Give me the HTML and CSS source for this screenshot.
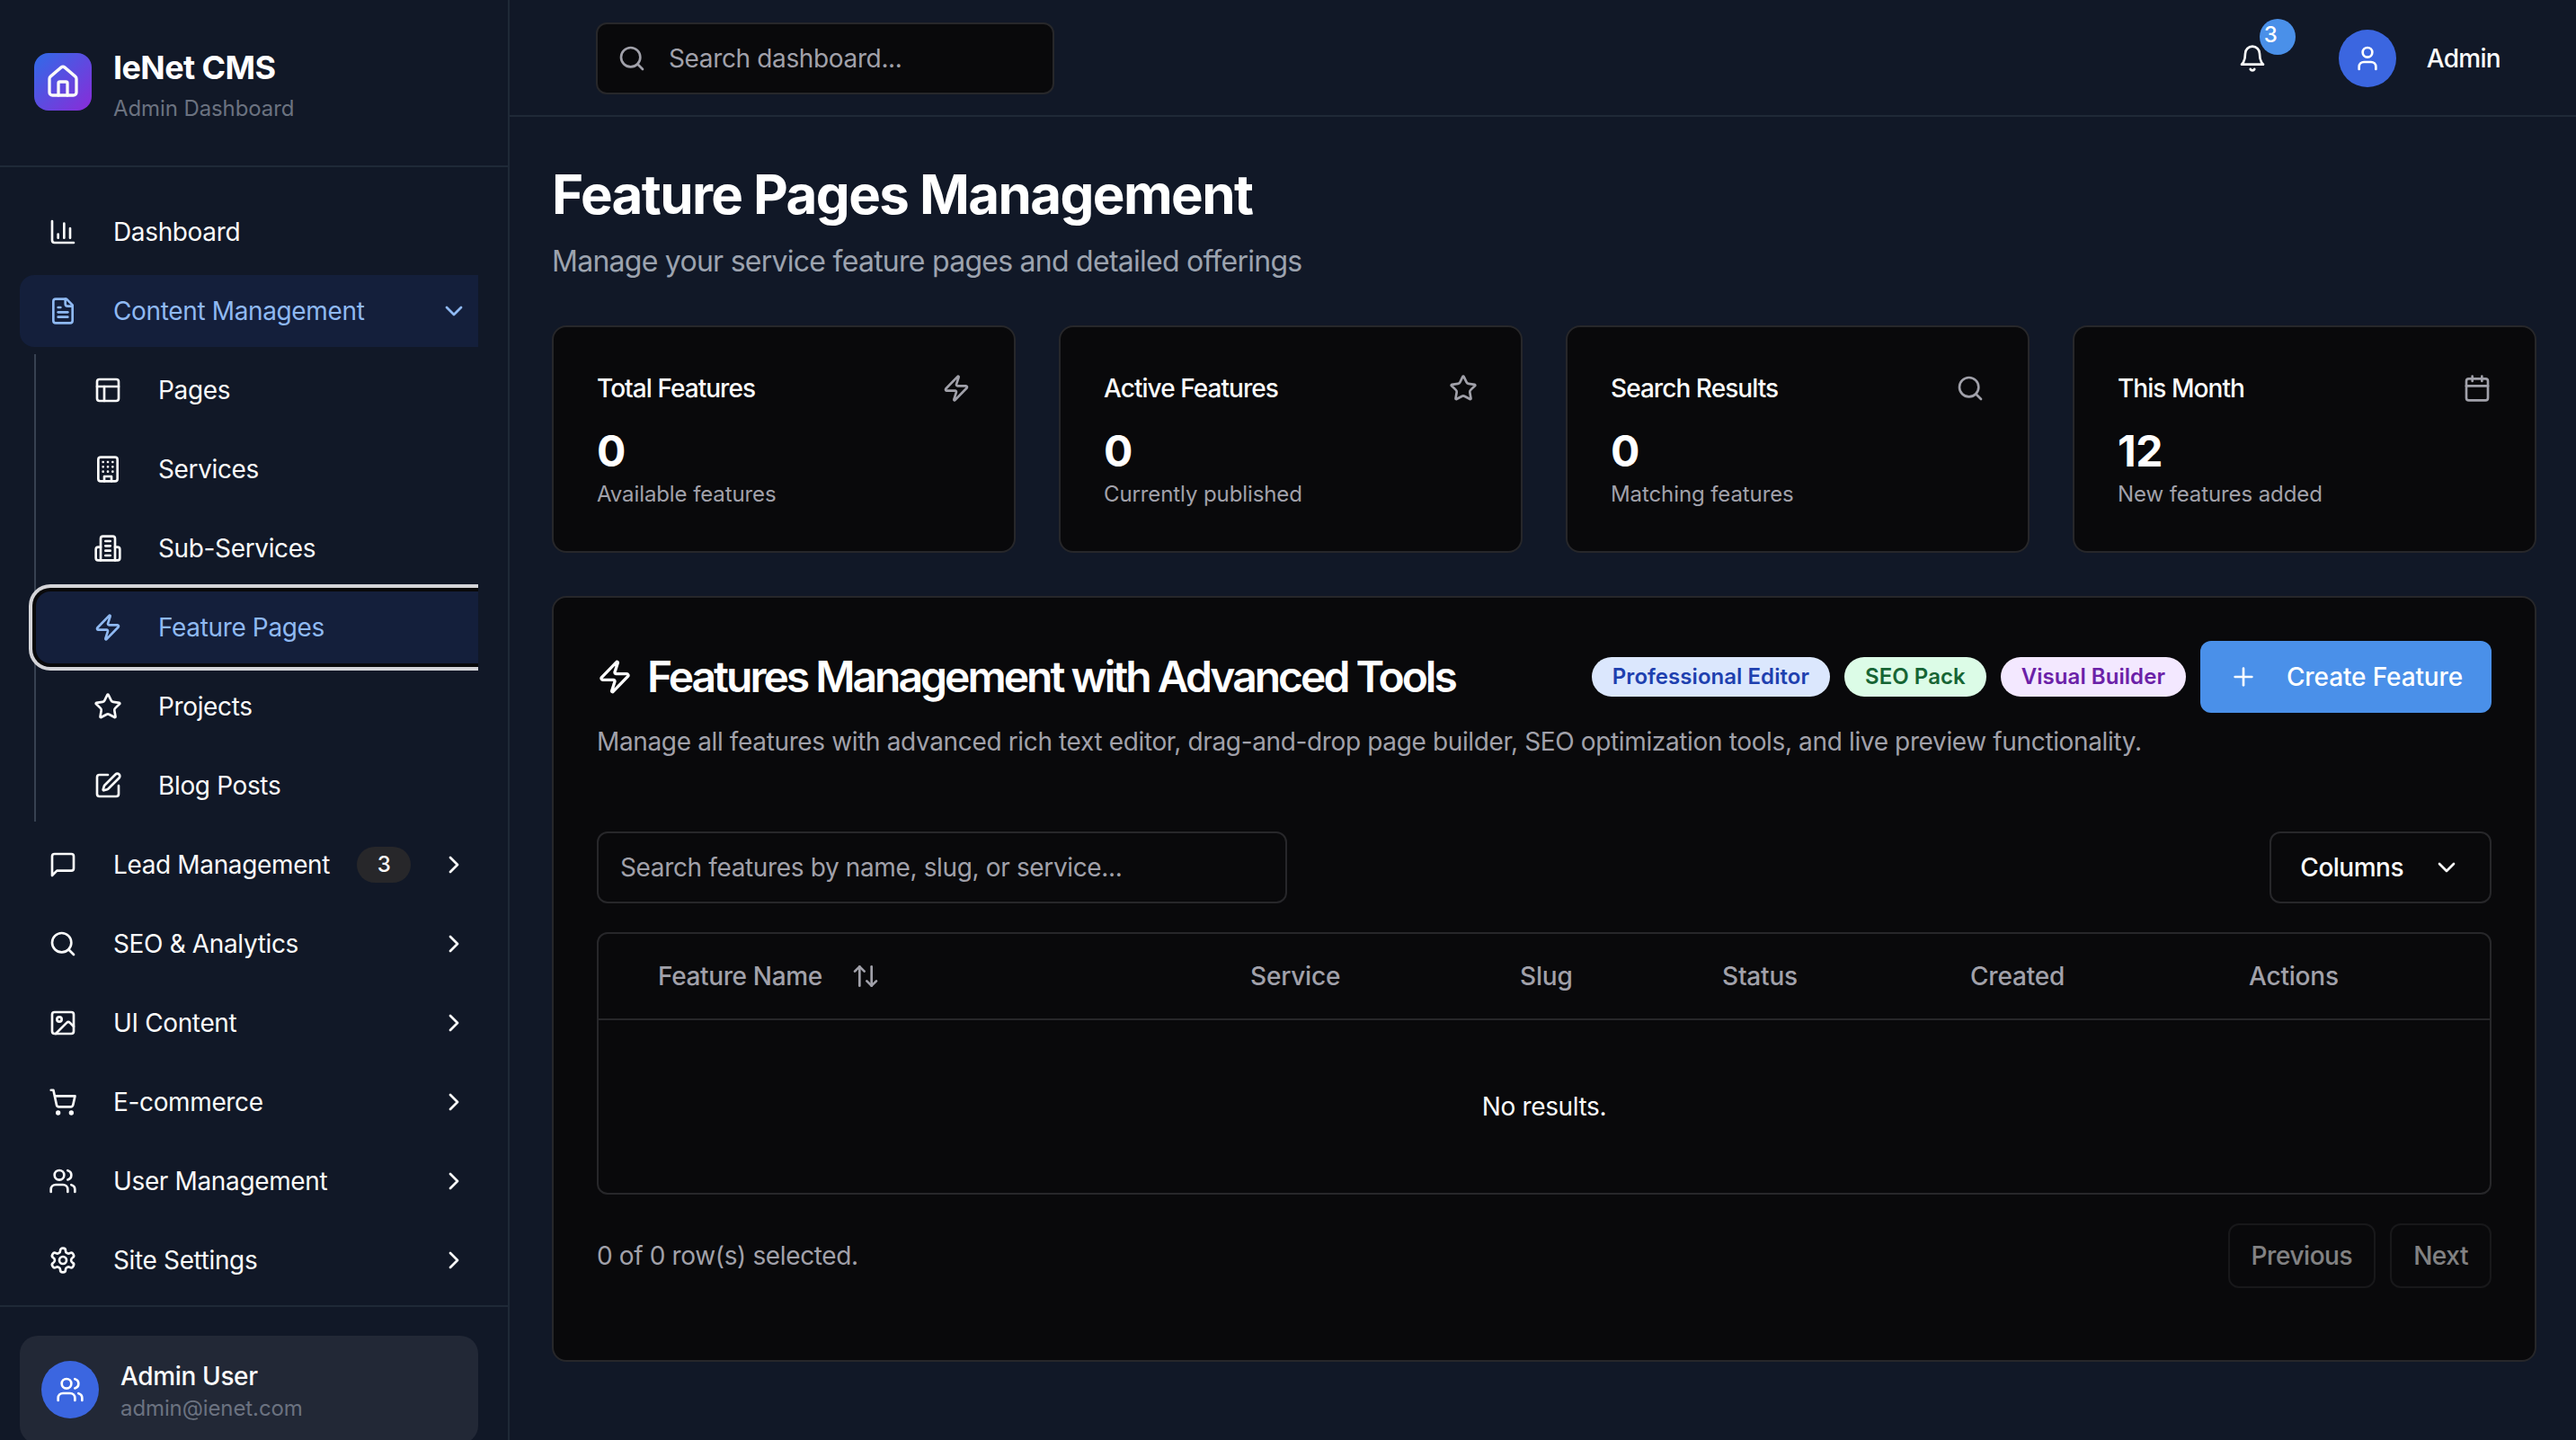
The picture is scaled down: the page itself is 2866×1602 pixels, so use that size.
FILE: index.html
```html
<!DOCTYPE html>
<html lang="en">
  <head>
    <meta charset="utf-8" />
    <title>IeNet CMS</title>
    <link rel="stylesheet" href="styles.css">
  </head>
  <body>
    <svg class="sprite" xmlns="http://www.w3.org/2000/svg">
      <symbol id="i-house" viewBox="0 0 24 24"><path d="M15 21v-8a1 1 0 0 0-1-1h-4a1 1 0 0 0-1 1v8"/><path d="M3 10a2 2 0 0 1 .709-1.528l7-5.999a2 2 0 0 1 2.582 0l7 5.999A2 2 0 0 1 21 10v9a2 2 0 0 1-2 2H5a2 2 0 0 1-2-2z"/></symbol>
      <symbol id="i-chart" viewBox="0 0 24 24"><path d="M3 3v16a2 2 0 0 0 2 2h16"/><path d="M18 17V9"/><path d="M13 17V5"/><path d="M8 17v-3"/></symbol>
      <symbol id="i-file" viewBox="0 0 24 24"><path d="M15 2H6a2 2 0 0 0-2 2v16a2 2 0 0 0 2 2h12a2 2 0 0 0 2-2V7Z"/><path d="M14 2v4a2 2 0 0 0 2 2h4"/><path d="M10 9H8"/><path d="M16 13H8"/><path d="M16 17H8"/></symbol>
      <symbol id="i-layout" viewBox="0 0 24 24"><rect width="18" height="18" x="3" y="3" rx="2"/><path d="M3 9h18"/><path d="M9 21V9"/></symbol>
      <symbol id="i-building" viewBox="0 0 24 24"><rect width="16" height="20" x="4" y="2" rx="2"/><path d="M9 22v-4h6v4"/><path d="M8 6h.01M16 6h.01M12 6h.01M12 10h.01M12 14h.01M16 10h.01M16 14h.01M8 10h.01M8 14h.01"/></symbol>
      <symbol id="i-building2" viewBox="0 0 24 24"><path d="M6 22V4a2 2 0 0 1 2-2h8a2 2 0 0 1 2 2v18Z"/><path d="M6 11H4a2 2 0 0 0-2 2v7a2 2 0 0 0 2 2h2"/><path d="M18 11h2a2 2 0 0 1 2 2v7a2 2 0 0 1-2 2h-2"/><path d="M10 6h4"/><path d="M10 10h4"/><path d="M10 14h4"/><path d="M10 18h4"/></symbol>
      <symbol id="i-zap" viewBox="0 0 24 24"><path d="M4 14a1 1 0 0 1-.78-1.63l9.9-10.2a.5.5 0 0 1 .86.46l-1.92 6.02A1 1 0 0 0 13 10h7a1 1 0 0 1 .78 1.63l-9.9 10.2a.5.5 0 0 1-.86-.46l1.92-6.02A1 1 0 0 0 11 14z"/></symbol>
      <symbol id="i-star" viewBox="0 0 24 24"><path d="M11.525 2.295a.53.53 0 0 1 .95 0l2.31 4.679a2.123 2.123 0 0 0 1.595 1.16l5.166.756a.53.53 0 0 1 .294.904l-3.736 3.638a2.123 2.123 0 0 0-.611 1.878l.882 5.14a.53.53 0 0 1-.771.56l-4.618-2.428a2.122 2.122 0 0 0-1.973 0L6.396 21.01a.53.53 0 0 1-.77-.56l.881-5.139a2.122 2.122 0 0 0-.611-1.879L2.16 9.795a.53.53 0 0 1 .294-.906l5.165-.755a2.122 2.122 0 0 0 1.597-1.16z"/></symbol>
      <symbol id="i-pen" viewBox="0 0 24 24"><path d="M12 3H5a2 2 0 0 0-2 2v14a2 2 0 0 0 2 2h14a2 2 0 0 0 2-2v-7"/><path d="M18.375 2.625a1 1 0 0 1 3 3l-9.013 9.014a2 2 0 0 1-.853.505l-2.873.84a.5.5 0 0 1-.62-.62l.84-2.873a2 2 0 0 1 .506-.852z"/></symbol>
      <symbol id="i-message" viewBox="0 0 24 24"><path d="M21 15a2 2 0 0 1-2 2H7l-4 4V5a2 2 0 0 1 2-2h14a2 2 0 0 1 2 2z"/></symbol>
      <symbol id="i-search" viewBox="0 0 24 24"><circle cx="11" cy="11" r="8"/><path d="m21 21-4.3-4.3"/></symbol>
      <symbol id="i-image" viewBox="0 0 24 24"><rect width="18" height="18" x="3" y="3" rx="2"/><circle cx="9" cy="9" r="2"/><path d="m21 15-3.086-3.086a2 2 0 0 0-2.828 0L6 21"/></symbol>
      <symbol id="i-cart" viewBox="0 0 24 24"><circle cx="8" cy="21" r="1"/><circle cx="19" cy="21" r="1"/><path d="M2.05 2.05h2l2.66 12.42a2 2 0 0 0 2 1.58h9.78a2 2 0 0 0 1.95-1.57l1.65-7.43H5.12"/></symbol>
      <symbol id="i-users" viewBox="0 0 24 24"><path d="M16 21v-2a4 4 0 0 0-4-4H6a4 4 0 0 0-4 4v2"/><circle cx="9" cy="7" r="4"/><path d="M22 21v-2a4 4 0 0 0-3-3.87"/><path d="M16 3.13a4 4 0 0 1 0 7.75"/></symbol>
      <symbol id="i-settings" viewBox="0 0 24 24"><path d="M12.22 2h-.44a2 2 0 0 0-2 2v.18a2 2 0 0 1-1 1.73l-.43.25a2 2 0 0 1-2 0l-.15-.08a2 2 0 0 0-2.73.73l-.22.38a2 2 0 0 0 .73 2.73l.15.1a2 2 0 0 1 1 1.72v.51a2 2 0 0 1-1 1.74l-.15.09a2 2 0 0 0-.73 2.73l.22.38a2 2 0 0 0 2.73.73l.15-.08a2 2 0 0 1 2 0l.43.25a2 2 0 0 1 1 1.73V20a2 2 0 0 0 2 2h.44a2 2 0 0 0 2-2v-.18a2 2 0 0 1 1-1.73l.43-.25a2 2 0 0 1 2 0l.15.08a2 2 0 0 0 2.73-.73l.22-.39a2 2 0 0 0-.73-2.73l-.15-.08a2 2 0 0 1-1-1.74v-.5a2 2 0 0 1 1-1.74l.15-.09a2 2 0 0 0 .73-2.73l-.22-.38a2 2 0 0 0-2.73-.73l-.15.08a2 2 0 0 1-2 0l-.43-.25a2 2 0 0 1-1-1.73V4a2 2 0 0 0-2-2z"/><circle cx="12" cy="12" r="3"/></symbol>
      <symbol id="i-bell" viewBox="0 0 24 24"><path d="M6 8a6 6 0 0 1 12 0c0 7 3 9 3 9H3s3-2 3-9"/><path d="M10.3 21a1.94 1.94 0 0 0 3.4 0"/></symbol>
      <symbol id="i-user" viewBox="0 0 24 24"><path d="M19 21v-2a4 4 0 0 0-4-4H9a4 4 0 0 0-4 4v2"/><circle cx="12" cy="7" r="4"/></symbol>
      <symbol id="i-calendar" viewBox="0 0 24 24"><path d="M8 2v4"/><path d="M16 2v4"/><rect width="18" height="18" x="3" y="4" rx="2"/><path d="M3 10h18"/></symbol>
      <symbol id="i-plus" viewBox="0 0 24 24"><path d="M5 12h14"/><path d="M12 5v14"/></symbol>
      <symbol id="i-down" viewBox="0 0 24 24"><path d="m6 9 6 6 6-6"/></symbol>
      <symbol id="i-right" viewBox="0 0 24 24"><path d="m9 18 6-6-6-6"/></symbol>
      <symbol id="i-sort" viewBox="0 0 24 24"><path d="m21 16-4 4-4-4"/><path d="M17 20V4"/><path d="m3 8 4-4 4 4"/><path d="M7 4v16"/></symbol>
    </svg>

    <aside class="sidebar">
      <div class="brand">
        <div class="brand-logo"><svg class="icon icon-lg"><use href="#i-house"/></svg></div>
        <div>
          <div class="brand-name">IeNet CMS</div>
          <div class="brand-sub">Admin Dashboard</div>
        </div>
      </div>

      <nav class="nav">
        <div class="nav-clip">
          <a class="nav-item" href="#"><svg class="icon"><use href="#i-chart"/></svg><span class="nav-label">Dashboard</span></a>
          <a class="nav-item active" href="#"><svg class="icon"><use href="#i-file"/></svg><span class="nav-label">Content Management</span><svg class="icon"><use href="#i-down"/></svg></a>
          <div class="nav-sub">
            <a class="nav-item" href="#"><svg class="icon"><use href="#i-layout"/></svg><span class="nav-label">Pages</span></a>
            <a class="nav-item" href="#"><svg class="icon"><use href="#i-building"/></svg><span class="nav-label">Services</span></a>
            <a class="nav-item" href="#"><svg class="icon"><use href="#i-building2"/></svg><span class="nav-label">Sub-Services</span></a>
            <a class="nav-item active focused" href="#"><svg class="icon"><use href="#i-zap"/></svg><span class="nav-label">Feature Pages</span></a>
            <a class="nav-item" href="#"><svg class="icon"><use href="#i-star"/></svg><span class="nav-label">Projects</span></a>
            <a class="nav-item" href="#"><svg class="icon"><use href="#i-pen"/></svg><span class="nav-label">Blog Posts</span></a>
          </div>
          <a class="nav-item" href="#"><svg class="icon"><use href="#i-message"/></svg><span class="nav-label">Lead Management</span><span class="nav-count">3</span><svg class="icon"><use href="#i-right"/></svg></a>
          <a class="nav-item" href="#"><svg class="icon"><use href="#i-search"/></svg><span class="nav-label">SEO &amp; Analytics</span><svg class="icon"><use href="#i-right"/></svg></a>
          <a class="nav-item" href="#"><svg class="icon"><use href="#i-image"/></svg><span class="nav-label">UI Content</span><svg class="icon"><use href="#i-right"/></svg></a>
          <a class="nav-item" href="#"><svg class="icon"><use href="#i-cart"/></svg><span class="nav-label">E-commerce</span><svg class="icon"><use href="#i-right"/></svg></a>
          <a class="nav-item" href="#"><svg class="icon"><use href="#i-users"/></svg><span class="nav-label">User Management</span><svg class="icon"><use href="#i-right"/></svg></a>
          <a class="nav-item" href="#"><svg class="icon"><use href="#i-settings"/></svg><span class="nav-label">Site Settings</span><svg class="icon"><use href="#i-right"/></svg></a>
        </div>
      </nav>

      <div class="sidebar-foot">
        <div class="user-card">
          <div class="avatar"><svg class="icon"><use href="#i-users"/></svg></div>
          <div>
            <div class="user-name">Admin User</div>
            <div class="user-mail">admin@ienet.com</div>
          </div>
        </div>
      </div>
    </aside>

    <div class="page">
      <header class="topbar">
        <div class="top-search">
          <svg class="icon"><use href="#i-search"/></svg>
          <span>Search dashboard...</span>
        </div>
        <div class="top-right">
          <div class="bell">
            <svg class="icon"><use href="#i-bell"/></svg>
            <span class="bell-count">3</span>
          </div>
          <div class="avatar"><svg class="icon"><use href="#i-user"/></svg></div>
          <span class="top-name">Admin</span>
        </div>
      </header>

      <main class="content">
        <h1>Feature Pages Management</h1>
        <p class="lead">Manage your service feature pages and detailed offerings</p>

        <section class="stats">
          <div class="stat">
            <div class="stat-head"><span>Total Features</span><svg class="icon"><use href="#i-zap"/></svg></div>
            <div class="stat-value">0</div>
            <div class="stat-note">Available features</div>
          </div>
          <div class="stat">
            <div class="stat-head"><span>Active Features</span><svg class="icon"><use href="#i-star"/></svg></div>
            <div class="stat-value">0</div>
            <div class="stat-note">Currently published</div>
          </div>
          <div class="stat">
            <div class="stat-head"><span>Search Results</span><svg class="icon"><use href="#i-search"/></svg></div>
            <div class="stat-value">0</div>
            <div class="stat-note">Matching features</div>
          </div>
          <div class="stat">
            <div class="stat-head"><span>This Month</span><svg class="icon"><use href="#i-calendar"/></svg></div>
            <div class="stat-value">12</div>
            <div class="stat-note">New features added</div>
          </div>
        </section>

        <section class="panel">
          <div class="panel-head">
            <h2><svg class="icon icon-lg"><use href="#i-zap"/></svg>Features Management with Advanced Tools</h2>
            <div class="panel-actions">
              <span class="chip chip-blue">Professional Editor</span>
              <span class="chip chip-green">SEO Pack</span>
              <span class="chip chip-purple">Visual Builder</span>
              <button class="btn btn-primary" type="button"><svg class="icon"><use href="#i-plus"/></svg>Create Feature</button>
            </div>
          </div>
          <p class="panel-desc">Manage all features with advanced rich text editor, drag-and-drop page builder, SEO optimization tools, and live preview functionality.</p>

          <div class="toolbar">
            <div class="filter">Search features by name, slug, or service...</div>
            <button class="btn btn-outline" type="button">Columns<svg class="icon"><use href="#i-down"/></svg></button>
          </div>

          <div class="table">
            <div class="table-head">
              <div class="col-name">Feature Name<svg class="icon"><use href="#i-sort"/></svg></div>
              <div>Service</div>
              <div>Slug</div>
              <div>Status</div>
              <div>Created</div>
              <div>Actions</div>
            </div>
            <div class="table-empty">No results.</div>
          </div>

          <div class="table-foot">
            <span>0 of 0 row(s) selected.</span>
            <div class="pager">
              <button class="btn btn-page" type="button">Previous</button>
              <button class="btn btn-page" type="button">Next</button>
            </div>
          </div>
        </section>
      </main>
    </div>
  </body>
</html>
```
FILE: styles.css
```css
html {
  font-family: Inter, "Liberation Sans", sans-serif;
  font-size: 28px;
  line-height: 40px;
  letter-spacing: -0.36px;
  color: #fafafa;
}

body {
  margin: 0;
  height: 100vh;
  display: flex;
  overflow: hidden;
  background-color: #111827;
}

.sprite {
  display: none;
}

.icon {
  flex: none;
  width: 32px;
  height: 32px;
  fill: none;
  stroke: currentColor;
  stroke-width: 2;
  stroke-linecap: round;
  stroke-linejoin: round;
}

.icon-lg {
  width: 40px;
  height: 40px;
}

/* sidebar */

.sidebar {
  flex: none;
  box-sizing: border-box;
  width: 567px;
  height: 100vh;
  overflow: hidden;
  border-right: 2px solid #1f2937;
}

.brand {
  box-sizing: border-box;
  height: 186px;
  display: flex;
  align-items: center;
  gap: 24px;
  padding: 0 38px 2px;
  border-bottom: 2px solid #1f2937;
}

.brand-logo {
  width: 64px;
  height: 64px;
  display: flex;
  align-items: center;
  justify-content: center;
  border-radius: 16px;
  background: linear-gradient(135deg, #2f6be8, #8a2bd8);
}

.brand-name {
  margin-top: 6px;
  font-size: 36px;
  line-height: 48px;
  font-weight: 700;
  letter-spacing: -0.6px;
  color: #fff;
}

.brand-sub {
  font-size: 24px;
  line-height: 32px;
  margin-top: 6px;
  letter-spacing: -0.1px;
  color: #6b7280;
}

.nav {
  padding: 32px 33px 10px 22px;
}

.nav-clip {
  overflow: hidden;
  display: flex;
  flex-direction: column;
  gap: 8px;
}

.nav-item {
  flex: none;
  box-sizing: border-box;
  width: 531px;
  height: 80px;
  display: flex;
  align-items: center;
  gap: 40px;
  padding: 0 32px;
  border-radius: 16px;
  color: #fafafa;
  text-decoration: none;
}

.nav-label {
  flex: 1;
  min-width: 0;
  white-space: nowrap;
}

.nav-item.active {
  background-color: #141f3b;
  color: #8fb9f2;
}

.nav-item.focused {
  box-shadow: 0 0 0 4px #09090b, 0 0 0 8px #d4d4d8;
}

.nav-count {
  flex: none;
  width: 60px;
  height: 40px;
  margin-right: -8px;
  border-radius: 20px;
  background-color: #27272a;
  font-size: 24px;
  line-height: 40px;
  font-weight: 500;
  text-align: center;
}

.nav-sub {
  display: flex;
  flex-direction: column;
  gap: 8px;
  margin-left: 16px;
  border-left: 2px solid #374151;
}

.nav-sub .nav-item {
  padding-left: 64px;
}

.sidebar-foot {
  padding: 32px 33px 0 22px;
  border-top: 2px solid #1f2937;
}

.user-card {
  box-sizing: border-box;
  height: 120px;
  display: flex;
  align-items: center;
  gap: 24px;
  padding: 0 24px;
  border-radius: 20px;
  background-color: #222836;
}

.avatar {
  flex: none;
  width: 64px;
  height: 64px;
  display: flex;
  align-items: center;
  justify-content: center;
  border-radius: 50%;
  background-color: #3b66e0;
  color: #fff;
}

.user-name {
  margin-top: 2px;
  font-weight: 500;
}

.user-mail {
  font-size: 24px;
  line-height: 32px;
  letter-spacing: -0.1px;
  color: #6b7280;
}

/* top bar */

.page {
  flex: 1;
  min-width: 0;
}

.topbar {
  box-sizing: border-box;
  height: 130px;
  display: flex;
  align-items: center;
  justify-content: space-between;
  padding: 2px 84px 0 96px;
  border-bottom: 2px solid #1f2937;
}

.top-search {
  box-sizing: border-box;
  width: 510px;
  height: 80px;
  display: flex;
  align-items: center;
  gap: 25px;
  padding: 0 22px;
  border: 2px solid #27272a;
  border-radius: 12px;
  background-color: #09090b;
  color: #a1a1aa;
}

.top-right {
  display: flex;
  align-items: center;
  gap: 32px;
}

.bell {
  position: relative;
  display: flex;
  margin-right: 48px;
}

.bell-count {
  position: absolute;
  top: -28px;
  left: 24px;
  box-sizing: border-box;
  width: 40px;
  height: 40px;
  padding-left: 5px;
  border-radius: 50%;
  background-color: #4a90e9;
  font-size: 24px;
  line-height: 36px;
  font-weight: 500;
  color: #fff;
}

.top-name {
  margin-left: 2px;
  font-weight: 500;
  letter-spacing: -0.7px;
}

/* content */

.content {
  padding: 50px 44px 0 47px;
}

h1 {
  margin: 0;
  font-size: 60px;
  line-height: 72px;
  font-weight: 700;
  letter-spacing: -1.6px;
  color: #fff;
}

.lead {
  margin: 15px 0 0;
  font-size: 32px;
  line-height: 48px;
  letter-spacing: -0.74px;
  color: #9ca3af;
}

.stats {
  display: grid;
  grid-template-columns: repeat(4, 1fr);
  gap: 48px;
  margin-top: 47px;
}

.stat,
.panel {
  border: 2px solid #27272a;
  border-radius: 16px;
  background-color: #09090b;
}

.stat {
  padding: 48px 48px 47px;
}

.stat-head {
  display: flex;
  align-items: center;
  justify-content: space-between;
  font-weight: 500;
  letter-spacing: -0.95px;
}

.stat-head .icon {
  color: #a1a1aa;
}

.stat-value {
  margin-top: 18px;
  font-size: 48px;
  line-height: 64px;
  font-weight: 700;
  color: #fff;
}

.stat-note {
  font-size: 24px;
  line-height: 32px;
  letter-spacing: -0.1px;
  color: #a1a1aa;
}

.panel {
  margin-top: 48px;
  padding: 48px;
}

.panel-head {
  display: flex;
  align-items: center;
  justify-content: space-between;
}

h2 {
  display: flex;
  align-items: center;
  gap: 16px;
  margin: 0;
  font-size: 48px;
  line-height: 64px;
  font-weight: 600;
  letter-spacing: -3px;
  color: #fff;
}

.panel-actions {
  display: flex;
  align-items: center;
  gap: 16px;
}

.chip {
  padding: 0 23px;
  height: 44px;
  border-radius: 22px;
  font-size: 24px;
  line-height: 44px;
  font-weight: 600;
  letter-spacing: 0.05px;
}

.chip-blue {
  background-color: #dbe7fd;
  color: #1e40af;
}

.chip-green {
  background-color: #dcfce7;
  color: #166534;
}

.chip-purple {
  background-color: #f3e8ff;
  color: #6b21a8;
}

.btn {
  box-sizing: border-box;
  display: flex;
  align-items: center;
  height: 80px;
  padding: 0 32px;
  border: none;
  border-radius: 12px;
  background: none;
  font: inherit;
  font-weight: 500;
  letter-spacing: inherit;
  color: #fafafa;
}

.btn-primary {
  gap: 32px;
  letter-spacing: -0.13px;
  background-color: #4a90e9;
  color: #fff;
}

.btn-outline {
  gap: 32px;
  border: 2px solid #27272a;
  letter-spacing: -0.5px;
}

.btn-page {
  height: 72px;
  padding: 0 24px;
  border: 2px solid #27272a;
  letter-spacing: -0.45px;
  opacity: 0.5;
}

.panel-desc {
  margin: 12px 0 0;
  color: #a1a1aa;
}

.toolbar {
  display: flex;
  justify-content: space-between;
  margin-top: 80px;
}

.filter {
  box-sizing: border-box;
  width: 768px;
  height: 80px;
  padding: 0 24px;
  border: 2px solid #27272a;
  border-radius: 12px;
  line-height: 76px;
  color: #a1a1aa;
}

.table {
  margin-top: 32px;
  border: 2px solid #27272a;
  border-radius: 12px;
}

.table-head {
  height: 94px;
  display: grid;
  grid-template-columns: 725px 300px 225px 276px 310px 1fr;
  align-items: center;
  border-bottom: 2px solid #27272a;
  font-weight: 500;
  letter-spacing: -0.2px;
  color: #a1a1aa;
}

.col-name {
  display: flex;
  align-items: center;
  gap: 32px;
  padding-left: 66px;
  letter-spacing: -0.36px;
}

.table-empty {
  height: 192px;
  line-height: 192px;
  text-align: center;
}

.table-foot {
  display: flex;
  align-items: center;
  justify-content: space-between;
  margin-top: 32px;
  margin-bottom: 32px;
  color: #a1a1aa;
}

.pager {
  display: flex;
  gap: 16px;
}
```
